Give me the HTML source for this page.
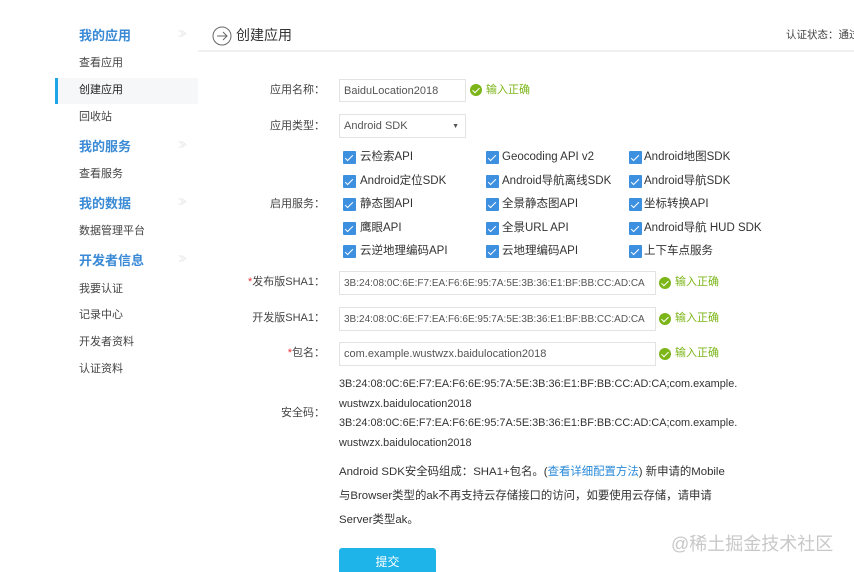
<!DOCTYPE html>
<html><head><meta charset="utf-8"><style>
*{margin:0;padding:0;box-sizing:border-box}
html,body{width:854px;height:572px;overflow:hidden}
body{background:#fff;font-family:"Liberation Sans","Noto Sans CJK SC",sans-serif;color:#333;position:relative}
.a{position:absolute;white-space:nowrap;line-height:1}
.h{color:#3a8ad6;font-size:13px;font-weight:bold;left:79px}
.s{font-size:11px;color:#444;left:79px}
.l{font-size:11px;color:#444;right:529px;text-align:right}
.in{position:absolute;border:1px solid #e3e3e3;background:#fff;font-size:11px;color:#555;padding-left:4px;display:flex;align-items:center;overflow:hidden;white-space:nowrap}
.cb{position:absolute;width:13px;height:13px;background:#3d8fe0;border-radius:1px}
.cb:after{content:"";position:absolute;left:4px;top:1.5px;width:3px;height:7px;border:solid #fff;border-width:0 1.5px 1.5px 0;transform:rotate(45deg)}
.ct{font-size:11.5px;color:#333;margin-top:1px}
.ok{position:absolute;width:12px;height:12px;border-radius:50%;background:#7cb518}
.ok:after{content:"";position:absolute;left:4px;top:2px;width:3px;height:6px;border:solid #fff;border-width:0 1.5px 1.5px 0;transform:rotate(45deg)}
.okt{font-size:11px;color:#7cb518}
.r{color:#e33}
.sha{font-size:10px}
</style></head><body>
<div class="a h" style="top:29px">我的应用</div>
<div class="a h" style="top:140px">我的服务</div>
<div class="a h" style="top:197px">我的数据</div>
<div class="a h" style="top:254px">开发者信息</div>
<div class="a" style="left:178px;top:30px;color:#ddd;font-size:9px">≫</div>
<div class="a" style="left:178px;top:141px;color:#ddd;font-size:9px">≫</div>
<div class="a" style="left:178px;top:198px;color:#ddd;font-size:9px">≫</div>
<div class="a" style="left:178px;top:255px;color:#ddd;font-size:9px">≫</div>
<div style="position:absolute;left:55px;top:78px;width:143px;height:26px;background:#f5f7f9"></div>
<div style="position:absolute;left:55px;top:78px;width:3px;height:26px;background:#1ea5e8"></div>
<div class="a s" style="top:58px">查看应用</div>
<div class="a s" style="top:85px;color:#222">创建应用</div>
<div class="a s" style="top:112px">回收站</div>
<div class="a s" style="top:169px">查看服务</div>
<div class="a s" style="top:226px">数据管理平台</div>
<div class="a s" style="top:284px">我要认证</div>
<div class="a s" style="top:310px">记录中心</div>
<div class="a s" style="top:337px">开发者资料</div>
<div class="a s" style="top:364px">认证资料</div>

<svg style="position:absolute;left:212px;top:26px" width="20" height="20" viewBox="0 0 20 20"><circle cx="10" cy="10" r="9" fill="none" stroke="#666" stroke-width="1"/><path d="M5 10H15M11 6L15 10L11 14" fill="none" stroke="#666" stroke-width="1"/></svg>
<div class="a" style="left:236px;top:28px;font-size:14px;color:#333">创建应用</div>
<div class="a" style="left:786px;top:30px;font-size:10.5px;color:#444">认证状态：通过</div>
<div style="position:absolute;left:198px;top:50px;width:656px;height:2px;background:#f0f0f0"></div>

<div class="a l" style="top:85px">应用名称：</div>
<div class="in" style="left:339px;top:79px;width:127px;height:23px">BaiduLocation2018</div>
<div class="ok" style="left:470px;top:84px"></div><div class="a okt" style="left:486px;top:85px">输入正确</div>
<div class="a l" style="top:121px">应用类型：</div>
<div class="in" style="left:339px;top:114px;width:127px;height:24px">Android SDK<span style="position:absolute;right:6px;font-size:7px">▼</span></div>

<div class="a l" style="top:199px">启用服务：</div>
<div class="cb" style="left:343px;top:151px"></div><div class="a ct" style="left:360px;top:151px">云检索API</div>
<div class="cb" style="left:486px;top:151px"></div><div class="a ct" style="left:502px;top:151px">Geocoding API v2</div>
<div class="cb" style="left:629px;top:151px"></div><div class="a ct" style="left:644px;top:151px">Android地图SDK</div>
<div class="cb" style="left:343px;top:175px"></div><div class="a ct" style="left:360px;top:175px">Android定位SDK</div>
<div class="cb" style="left:486px;top:175px"></div><div class="a ct" style="left:502px;top:175px">Android导航离线SDK</div>
<div class="cb" style="left:629px;top:175px"></div><div class="a ct" style="left:644px;top:175px">Android导航SDK</div>
<div class="cb" style="left:343px;top:198px"></div><div class="a ct" style="left:360px;top:198px">静态图API</div>
<div class="cb" style="left:486px;top:198px"></div><div class="a ct" style="left:502px;top:198px">全景静态图API</div>
<div class="cb" style="left:629px;top:198px"></div><div class="a ct" style="left:644px;top:198px">坐标转换API</div>
<div class="cb" style="left:343px;top:222px"></div><div class="a ct" style="left:360px;top:222px">鹰眼API</div>
<div class="cb" style="left:486px;top:222px"></div><div class="a ct" style="left:502px;top:222px">全景URL API</div>
<div class="cb" style="left:629px;top:222px"></div><div class="a ct" style="left:644px;top:222px">Android导航 HUD SDK</div>
<div class="cb" style="left:343px;top:245px"></div><div class="a ct" style="left:360px;top:245px">云逆地理编码API</div>
<div class="cb" style="left:486px;top:245px"></div><div class="a ct" style="left:502px;top:245px">云地理编码API</div>
<div class="cb" style="left:629px;top:245px"></div><div class="a ct" style="left:644px;top:245px">上下车点服务</div>

<div class="a l" style="top:277px"><span class="r">*</span>发布版SHA1：</div>
<div class="in sha" style="left:339px;top:271px;width:317px;height:24px">3B:24:08:0C:6E:F7:EA:F6:6E:95:7A:5E:3B:36:E1:BF:BB:CC:AD:CA</div>
<div class="ok" style="left:659px;top:277px"></div><div class="a okt" style="left:675px;top:277px">输入正确</div>
<div class="a l" style="top:313px">开发版SHA1：</div>
<div class="in sha" style="left:339px;top:307px;width:317px;height:24px">3B:24:08:0C:6E:F7:EA:F6:6E:95:7A:5E:3B:36:E1:BF:BB:CC:AD:CA</div>
<div class="ok" style="left:659px;top:313px"></div><div class="a okt" style="left:675px;top:313px">输入正确</div>
<div class="a l" style="top:348px"><span class="r">*</span>包名：</div>
<div class="in" style="left:339px;top:342px;width:317px;height:24px">com.example.wustwzx.baidulocation2018</div>
<div class="ok" style="left:659px;top:348px"></div><div class="a okt" style="left:675px;top:348px">输入正确</div>

<div class="a l" style="top:408px">安全码：</div>
<div class="a" style="left:339px;top:375px;font-size:10.9px;line-height:19.7px">3B:24:08:0C:6E:F7:EA:F6:6E:95:7A:5E:3B:36:E1:BF:BB:CC:AD:CA;com.example.<br>wustwzx.baidulocation2018<br>3B:24:08:0C:6E:F7:EA:F6:6E:95:7A:5E:3B:36:E1:BF:BB:CC:AD:CA;com.example.<br>wustwzx.baidulocation2018</div>
<div class="a" style="left:339px;top:460px;font-size:11.4px;line-height:24px">Android SDK安全码组成：SHA1+包名。(<span style="color:#2a8ad8">查看详细配置方法</span>) 新申请的Mobile<br>与Browser类型的ak不再支持云存储接口的访问，如要使用云存储，请申请<br>Server类型ak。</div>
<div style="position:absolute;left:339px;top:548px;width:97px;height:30px;background:#1eb4ea;border-radius:3px;color:#fff;font-size:12px;text-align:center;line-height:28px">提交</div>
<div class="a" style="left:671px;top:535px;font-size:18px;color:#c8c8c8">@稀土掘金技术社区</div>
</body></html>
